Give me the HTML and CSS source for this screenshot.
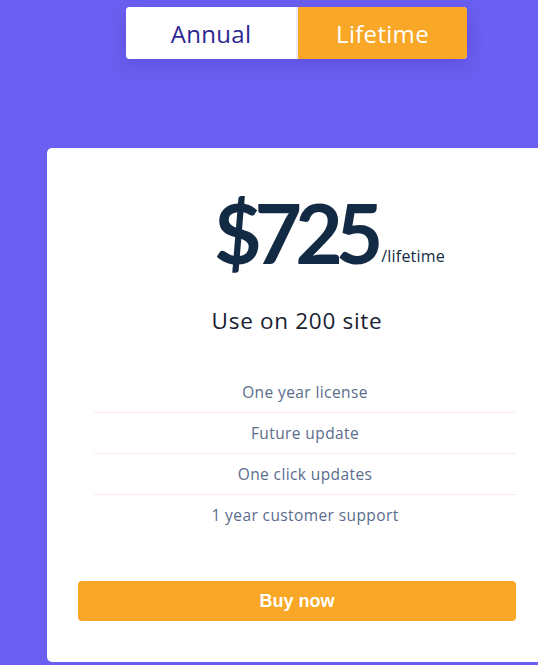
FILE: index.html
```html
<!DOCTYPE html>
<html>
<head>
<meta charset="utf-8">
<link rel="stylesheet" href="styles.css">
</head>
<body>
<div class="page">
  <div class="toggle">
    <button class="tab tab-annual">Annual</button>
    <button class="tab tab-lifetime">Lifetime</button>
  </div>
  <div class="card">
    <div class="price">
      <span class="amount">$725</span><span class="period">/lifetime</span>
    </div>
    <div class="usage">Use on 200 site</div>
    <ul class="features">
      <li>One year license</li>
      <li>Future update</li>
      <li>One click updates</li>
      <li>1 year customer support</li>
    </ul>
    <button class="buy">Buy now</button>
  </div>
</div>
</body>
</html>
```
FILE: styles.css
```css
html, body {
  margin: 0;
  padding: 0;
}
body {
  background: #6a5ff0;
  font-family: "Open Sans", "Lato", sans-serif;
  overflow: hidden;
  height: 665px;
}
.page {
  display: flex;
  flex-direction: column;
  align-items: flex-start;
  padding-left: 47px;
}
.toggle {
  display: flex;
  gap: 2px;
  margin-top: 7px;
  margin-left: 79px;
  background: #eceaff;
  border-radius: 4px;
  box-shadow: 0 6px 18px rgba(60, 40, 180, 0.25);
}
.tab {
  border: none;
  font-family: inherit;
  font-size: 24px;
  letter-spacing: 0.3px;
  height: 52px;
  padding: 0;
  cursor: pointer;
}
.tab-annual {
  width: 170px;
  background: #ffffff;
  color: #2c2790;
  border-radius: 4px 0 0 4px;
}
.tab-lifetime {
  width: 169px;
  background: #f8a726;
  color: #ffffff;
  border-radius: 0 4px 4px 0;
}
.card {
  margin-top: 89px;
  width: 500px;
  height: 514px;
  box-sizing: border-box;
  background: #ffffff;
  border-radius: 5px;
  padding: 43px 31px 0 31px;
  display: flex;
  flex-direction: column;
  align-items: center;
}
.price {
  display: flex;
  align-items: baseline;
  color: #132a45;
  margin-left: 65px;
}
.amount {
  font-family: "Lato", sans-serif;
  font-size: 82px;
  font-weight: 700;
  line-height: 82px;
  letter-spacing: -7px;
}
.period {
  font-size: 16px;
  letter-spacing: 0.2px;
  margin-left: 5px;
  position: relative;
  top: -2px;
}
.usage {
  font-size: 22.5px;
  letter-spacing: 0.7px;
  color: #1a2233;
  margin-top: 34px;
  line-height: 28px;
}
.features {
  list-style: none;
  margin: 37px 0 0 16px;
  padding: 0;
  width: 422px;
}
.features li {
  text-align: center;
  font-size: 15.5px;
  letter-spacing: 0.4px;
  color: #5a6c8c;
  height: 40px;
  line-height: 40px;
  border-bottom: 1px solid #fbe8f4;
}
.features li:last-child {
  border-bottom: none;
}
.buy {
  margin-top: 46px;
  width: 438px;
  height: 40px;
  border: none;
  border-radius: 4px;
  background: #f8a726;
  color: #ffffff;
  font-family: "Liberation Sans", Arial, sans-serif;
  font-weight: 700;
  font-size: 18px;
  cursor: pointer;
}
```
